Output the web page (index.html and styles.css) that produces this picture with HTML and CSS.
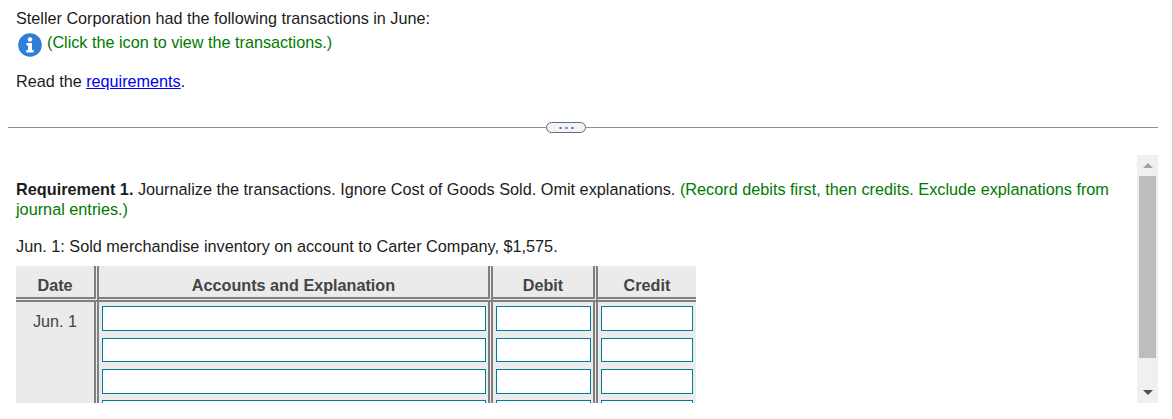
FILE: index.html
```html
<!DOCTYPE html>
<html lang="en">
<head>
    <meta charset="UTF-8">
    <title>Journal Entries</title>
    <link rel="stylesheet" href="styles.css">
</head>
<body>

<div class="intro">
    <p class="intro-line">Steller Corporation had the following transactions in June:</p>
    <p class="icon-line">
        <svg class="info-icon" width="24" height="24" viewBox="0 0 25 25">
            <circle cx="12.5" cy="12.5" r="12.3" fill="#2f7ed8"/>
            <circle cx="12.5" cy="6.8" r="2.3" fill="#fff"/>
            <path d="M8.8 10.3h5.8v7.4h1.7v2.6H8.6v-2.6h1.9v-4.8H8.8z" fill="#fff"/>
        </svg>
        <span class="hint">(Click the icon to view the transactions.)</span>
    </p>
    <p class="read-line">Read the <a href="#">requirements</a>.</p>
</div>

<div class="divider">
    <span class="divider-btn">
        <svg width="15" height="4" viewBox="0 0 15 4"><path d="M0.5 1h2v2h-2zM6.5 1h2v2h-2zM12.5 1h2v2h-2z" fill="#5a6a7a"/></svg>
    </span>
</div>

<div class="panel">
    <div class="panel-body">
        <p class="req"><b>Requirement 1.</b> Journalize the transactions. Ignore Cost of Goods Sold. Omit explanations. <span class="hint">(Record debits first, then credits. Exclude explanations from journal entries.)</span></p>
        <p class="transaction">Jun. 1: Sold merchandise inventory on account to Carter Company, $1,575.</p>

        <table class="journal">
            <thead>
                <tr>
                    <th class="col-date">Date</th>
                    <th class="col-account">Accounts and Explanation</th>
                    <th class="col-debit">Debit</th>
                    <th class="col-credit">Credit</th>
                </tr>
            </thead>
            <tbody>
                <tr>
                    <td class="date-cell" rowspan="4">Jun. 1</td>
                    <td><input type="text"></td>
                    <td><input type="text"></td>
                    <td><input type="text"></td>
                </tr>
                <tr>
                    <td><input type="text"></td>
                    <td><input type="text"></td>
                    <td><input type="text"></td>
                </tr>
                <tr>
                    <td><input type="text"></td>
                    <td><input type="text"></td>
                    <td><input type="text"></td>
                </tr>
                <tr>
                    <td><input type="text"></td>
                    <td><input type="text"></td>
                    <td><input type="text"></td>
                </tr>
            </tbody>
        </table>
    </div>

    <div class="scrollbar">
        <span class="arrow-up"></span>
        <span class="thumb"></span>
        <span class="arrow-down"></span>
    </div>
</div>

<div class="page-edge"></div>

</body>
</html>
```

FILE: styles.css
```css
html, body {
    height: 100%;
    overflow: hidden;
}
body {
    font-family: "Liberation Sans", Arial, sans-serif;
    font-size: 16.2px;
    color: #1c1c1c;
    margin: 0;
    padding: 0;
    background-color: #fff;
}
p {
    margin: 0;
}
.intro {
    padding: 9px 16px 0;
    height: 109px;
    box-sizing: border-box;
    line-height: 19px;
}
.icon-line {
    display: flex;
    align-items: flex-start;
    gap: 5px;
    margin-top: 5px;
    padding-left: 2px;
    height: 24px;
}
.info-icon {
    flex: none;
}
.hint {
    color: #007a00;
}
.read-line {
    margin-top: 15px;
}
a {
    color: #0000ee;
}
.divider {
    margin: 0 15px 0 8px;
    height: 46px;
    display: flex;
    align-items: flex-start;
    justify-content: center;
    position: relative;
}
.divider::before {
    content: "";
    position: absolute;
    left: 0;
    right: 0;
    top: 18px;
    border-top: 1px solid #8a8f9c;
}
.divider-btn {
    position: relative;
    width: 38px;
    height: 9px;
    margin-top: 13px;
    margin-right: 34px;
    border: 1px solid #5c6f84;
    border-radius: 6px;
    background: #f2f4f6;
    display: flex;
    align-items: center;
    justify-content: center;
}
.panel {
    position: relative;
    height: 248px;
    margin-right: 15px;
    overflow: hidden;
}
.panel-body {
    padding: 24px 16px 0;
    font-size: 16.25px;
    line-height: 20px;
    width: 1131px;
    box-sizing: border-box;
}
.transaction {
    margin-top: 17px;
}
.journal {
    margin-top: 10px;
    border-collapse: separate;
    border-spacing: 0;
    table-layout: fixed;
    width: 680px;
    background: #ebebeb;
    color: #444;
}
.journal th {
    height: 24px;
    padding: 7px 0 0;
    font-size: 16.2px;
    border-bottom: 5px double #808080;
    border-right: 5px double #808080;
}
.journal td {
    padding: 4.3px 2px 0 3px;
    height: 27.1px;
    font-size: 16.2px;
    vertical-align: top;
    text-align: center;
    border-right: 5px double #808080;
}
.journal th:last-child, .journal td:last-child {
    border-right: none;
}
.journal td:last-child {
    padding-right: 3px;
}
.col-date {
    width: 78px;
}
.col-account {
    width: 389px;
}
.col-debit {
    width: 100px;
}
.journal .date-cell {
    padding: 9px 0 0;
}
.journal input {
    display: block;
    width: 100%;
    height: 24.6px;
    box-sizing: border-box;
    border: 1px solid #007c9c;
    background: #fff;
    padding: 0;
    margin: 0;
}
.scrollbar {
    position: absolute;
    left: 1137px;
    top: 0;
    width: 21px;
    height: 248px;
    background: #f0f0f0;
}
.thumb {
    position: absolute;
    left: 2px;
    top: 21px;
    width: 17px;
    height: 182px;
    background: #bdbdbd;
}
.arrow-up, .arrow-down {
    position: absolute;
    left: 6px;
    width: 0;
    height: 0;
    border-left: 5px solid transparent;
    border-right: 5px solid transparent;
}
.arrow-up {
    top: 8px;
    border-bottom: 5px solid #a3a3a3;
}
.arrow-down {
    bottom: 8px;
    border-top: 5px solid #505050;
}
.page-edge {
    position: absolute;
    top: 0;
    right: 0;
    width: 1px;
    height: 100%;
    background: #d0d0d0;
}
```
